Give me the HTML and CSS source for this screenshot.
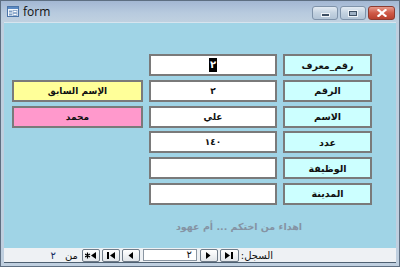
FILE: index.html
```html
<!DOCTYPE html>
<html lang="ar">
<head>
    <meta charset="UTF-8">
    <title>form</title>
    <link rel="stylesheet" href="styles.css">
</head>
<body>
<div class="window">
    <div class="titlebar">
        <svg class="app-icon" width="12" height="11" viewBox="0 0 12 11">
            <rect x="0.5" y="0.5" width="11" height="10" fill="#f4f8fc" stroke="#4a74a8"/>
            <rect x="1" y="1" width="10" height="2" fill="#5b8ac4"/>
            <rect x="2" y="4.5" width="3" height="2" fill="#7f9fc6"/>
            <rect x="6" y="4.5" width="4" height="2" fill="#fff" stroke="#7f9fc6" stroke-width="0.8"/>
            <rect x="2" y="7.5" width="3" height="2" fill="#7f9fc6"/>
            <rect x="6" y="7.5" width="4" height="2" fill="#fff" stroke="#7f9fc6" stroke-width="0.8"/>
        </svg>
        <span class="title">form</span>
        <div class="caption-btns">
            <span class="cbtn"><i class="min-glyph"></i></span>
            <span class="cbtn"><i class="max-glyph"></i></span>
            <span class="cbtn close">
                <svg width="10" height="8" viewBox="0 0 10 8">
                    <path d="M1.5 1 L8.5 7 M8.5 1 L1.5 7" stroke="#fff" stroke-width="2.2" stroke-linecap="square"/>
                </svg>
            </span>
        </div>
    </div>

    <div class="client">
        <div class="form" dir="rtl">
            <div class="lbl r1">رقم_معرف</div>
            <div class="val r1"><span class="sel">٢</span></div>

            <div class="lbl r2">الرقم</div>
            <div class="val r2">٢</div>
            <div class="side prev r2">الإسم السابق</div>

            <div class="lbl r3">الاسم</div>
            <div class="val r3">علي</div>
            <div class="side name r3">محمد</div>

            <div class="lbl r4">عدد</div>
            <div class="val r4">١٤٠</div>

            <div class="lbl r5">الوظيفة</div>
            <div class="val r5"></div>

            <div class="lbl r6">المدينة</div>
            <div class="val r6"></div>
        </div>

        <div class="dedication" dir="rtl">اهداء من اختكم ... أم عهود</div>

        <!-- شريط التنقل -->
        <div class="navbar" dir="rtl">
            <span class="nav-label">السجل:</span>
            <span class="nbtn first">
                <svg width="8" height="7" viewBox="0 0 8 7"><path d="M0 0 L5 3.5 L0 7Z M6 0 H8 V7 H6Z" fill="#000"/></svg>
            </span>
            <span class="nbtn">
                <svg width="5" height="7" viewBox="0 0 5 7"><path d="M0 0 L4.5 3.5 L0 7Z" fill="#000"/></svg>
            </span>
            <span class="rec-box">٢</span>
            <span class="nbtn">
                <svg width="5" height="7" viewBox="0 0 5 7"><path d="M5 0 L0.5 3.5 L5 7Z" fill="#000"/></svg>
            </span>
            <span class="nbtn">
                <svg width="8" height="7" viewBox="0 0 8 7"><path d="M0 0 H2 V7 H0Z M8 0 L3 3.5 L8 7Z" fill="#000"/></svg>
            </span>
            <span class="nbtn">
                <svg width="11" height="7" viewBox="0 0 11 7"><path d="M11 0 L6 3.5 L11 7Z" fill="#000"/><path d="M2.5 0.5 V6.5 M0 2 L5 5 M0 5 L5 2" stroke="#000" stroke-width="1.2"/></svg>
            </span>
            <span class="nav-of">من</span>
            <span class="nav-count">٢</span>
        </div>
    </div>
</div>
</body>
</html>
```

FILE: styles.css
```css
* { box-sizing: border-box; }
body {
    margin: 0;
    background: #fff;
    font-family: 'DejaVu Sans', sans-serif;
}
.window {
    width: 400px;
    height: 267px;
    border: 1px solid #5e6f82;
    background: #bfcfdf;
    display: flex;
    flex-direction: column;
}

/* title bar */
.titlebar {
    height: 21px;
    display: flex;
    align-items: center;
    padding: 0 4px 0 6px;
    background: linear-gradient(to bottom, #a3b7d3, #b7cade 55%, #c0d1e0);
}
.app-icon { flex: none; }
.title {
    margin-left: 4px;
    font-family: 'Open Sans', 'DejaVu Sans', sans-serif;
    font-size: 12px;
    color: #111;
    line-height: 1;
}
.caption-btns {
    margin-left: auto;
    display: flex;
    gap: 2px;
    align-self: flex-start;
    margin-top: 5px;
}
.cbtn {
    width: 26px;
    height: 14px;
    border: 1px solid #7f93aa;
    border-radius: 3px;
    background: linear-gradient(to bottom, #e3ebf3, #c3d2e0 50%, #b2c4d6);
    display: flex;
    align-items: center;
    justify-content: center;
}
.cbtn.close {
    width: 27px;
    border-color: #8c3b31;
    background: linear-gradient(to bottom, #e79a8c, #cf5a48 50%, #b8412f);
}
.min-glyph {
    width: 9px;
    height: 4px;
    margin-top: 3px;
    background: #3d4f63;
    border: 1px solid #eef3f8;
}
.max-glyph {
    width: 10px;
    height: 7px;
    border: 1px solid #eef3f8;
    outline: 1px solid #3d4f63;
    outline-offset: -2px;
    background: #9fb1c4;
}

/* client area */
.client {
    flex: 1;
    margin: 0 3px 3px;
    background: #a0d4e6;
    border-top: 1px solid #d7e4ee;
    border-bottom: 1px solid #4e6072;
    display: flex;
    flex-direction: column;
}
.form {
    display: grid;
    grid-template-columns: 89px 128px 131px;
    grid-template-rows: repeat(6, 22px);
    column-gap: 6px;
    row-gap: 3.8px;
    padding: 31px 24px 0 0;
    font-size: 9px;
    font-weight: bold;
}
.form > div {
    display: flex;
    align-items: center;
    justify-content: center;
    border: 2px solid #7a7a7a;
    color: #111;
}
.lbl { grid-column: 1; background: #ccffff; font-size: 9.5px; }
.val { grid-column: 2; background: #fff; }
.side { grid-column: 3; }
.r1 { grid-row: 1; }
.r2 { grid-row: 2; }
.r3 { grid-row: 3; }
.r4 { grid-row: 4; }
.r5 { grid-row: 5; }
.r6 { grid-row: 6; }
.prev { background: #ffff99; }
.name { background: #ff99cc; color: #3a0000; }
.sel { background: #000; color: #fff; padding: 0 1px; line-height: 14px; font-size: 10px; }

.dedication {
    margin-top: 15px;
    padding-right: 94px;
    font-size: 9.5px;
    font-weight: bold;
    color: #8593a3;
    line-height: 14px;
}

/* navigation bar */
.navbar {
    margin-top: auto;
    height: 14px;
    background: #eef1f4;
    display: flex;
    align-items: center;
    padding-right: 123px;
    font-size: 10px;
    color: #111;
}
.nav-label { margin-left: 2px; }
.nbtn {
    width: 18px;
    height: 13px;
    margin-left: 2px;
    border: 1px solid #6f7b88;
    border-radius: 2px;
    background: linear-gradient(to bottom, #ffffff, #e2e6ea);
    display: flex;
    align-items: center;
    justify-content: center;
}
.nbtn.first { width: 19px; }
.rec-box {
    width: 54px;
    height: 12px;
    margin: 0 1px 0 3px;
    background: #fff;
    border: 1px solid #8a96a2;
    padding-right: 4px;
    line-height: 10px;
}
.nav-of { margin-right: 2px; }
.nav-count { margin-right: 9px; color: #102a60; }
```
